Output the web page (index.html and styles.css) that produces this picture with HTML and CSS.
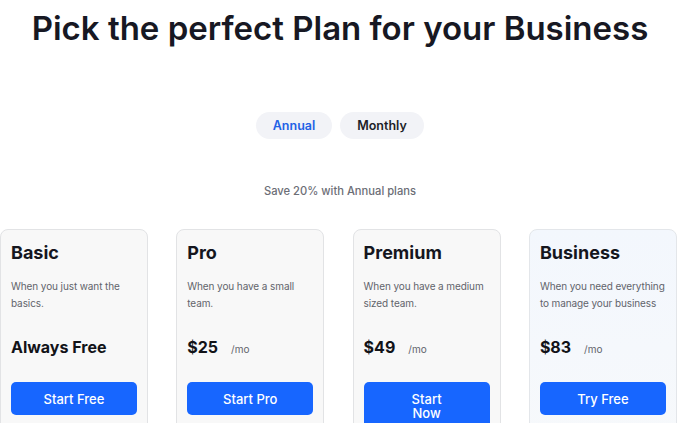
FILE: index.html
```html
<!DOCTYPE html>
<html lang="en">
<head>
<meta charset="utf-8">
<title>Pricing</title>
<link rel="stylesheet" href="styles.css">
</head>
<body>
<main class="page">
  <h1 class="title">Pick the perfect Plan for your Business</h1>
  <div class="toggle">
    <button class="pill pill-annual">Annual</button>
    <button class="pill pill-monthly">Monthly</button>
  </div>
  <p class="save">Save 20% with Annual plans</p>
  <section class="cards">
    <article class="card">
      <h2 class="plan">Basic</h2>
      <p class="desc">When you just want the basics.</p>
      <div class="price"><span class="amount">Always Free</span></div>
      <button class="cta">Start Free</button>
    </article>
    <article class="card">
      <h2 class="plan">Pro</h2>
      <p class="desc">When you have a small team.</p>
      <div class="price"><span class="amount">$25</span><span class="per">/mo</span></div>
      <button class="cta">Start Pro</button>
    </article>
    <article class="card">
      <h2 class="plan">Premium</h2>
      <p class="desc">When you have a medium sized team.</p>
      <div class="price"><span class="amount">$49</span><span class="per">/mo</span></div>
      <button class="cta cta-wrap">Start<br>Now</button>
    </article>
    <article class="card card-featured">
      <h2 class="plan">Business</h2>
      <p class="desc">When you need everything to manage your business</p>
      <div class="price"><span class="amount">$83</span><span class="per">/mo</span></div>
      <button class="cta">Try Free</button>
    </article>
  </section>
</main>
</body>
</html>
```

FILE: styles.css
```css
* { box-sizing: border-box; }
html, body { margin: 0; padding: 0; background: #ffffff; }
body {
  font-family: Inter, "Liberation Sans", Arial, sans-serif;
  color: #15161e;
  overflow: hidden;
}
.page { display: flex; flex-direction: column; align-items: center; }
.title {
  margin: 8px 0 0;
  font-size: 33px;
  line-height: 40px;
  font-weight: 600;
  color: #171823;
  text-align: center;
  white-space: nowrap;
}
.toggle {
  margin-top: 64px;
  display: flex;
  gap: 8px;
}
.pill {
  border: 0;
  background: #f2f3f7;
  height: 27px;
  border-radius: 14px;
  padding: 0;
  font-family: inherit;
  font-size: 12.5px;
  font-weight: 600;
  color: #1d1e28;
  text-align: center;
}
.pill-annual { width: 76px; color: #2262e6; }
.pill-monthly { width: 84px; }
.save {
  margin: 45px 0 0;
  font-size: 11.2px;
  line-height: 14px;
  font-weight: 500;
  color: #6c6e76;
}
.cards {
  align-self: stretch;
  margin-top: 31px;
  display: flex;
  gap: 28.3px;
}
.card {
  flex: 0 0 148px;
  height: 240px;
  background: #f8f8f8;
  border: 1px solid #e2e3e5;
  border-radius: 8px;
  padding: 12px 10px 0;
  display: flex;
  flex-direction: column;
  align-items: flex-start;
}
.card-featured {
  background: linear-gradient(180deg, #f3f7fd 0%, #f7f9fb 100%);
  border-color: #e3e6ea;
}
.plan {
  margin: 0;
  font-size: 18px;
  line-height: 22px;
  font-weight: 700;
  color: #15161e;
}
.desc {
  margin: 14px 0 0;
  height: 34px;
  font-size: 10px;
  letter-spacing: -0.1px;
  line-height: 17px;
  color: #62646b;
}
.price {
  margin-top: 25px;
  height: 20px;
  display: flex;
  align-items: baseline;
  gap: 13px;
  line-height: 20px;
}
.amount {
  font-size: 16px;
  font-weight: 700;
  color: #121318;
}
.per {
  font-size: 10px;
  color: #62646b;
}
.cta {
  margin-top: 25px;
  width: 126px;
  height: 33px;
  border: 0;
  border-radius: 5px;
  background: #1766ff;
  color: #ffffff;
  font-family: inherit;
  font-size: 13px;
  font-weight: 500;
  line-height: 14px;
  padding: 0;
}
.cta-wrap {
  height: 46px;
  padding-top: 1px;
  padding-bottom: 0;
}
```
